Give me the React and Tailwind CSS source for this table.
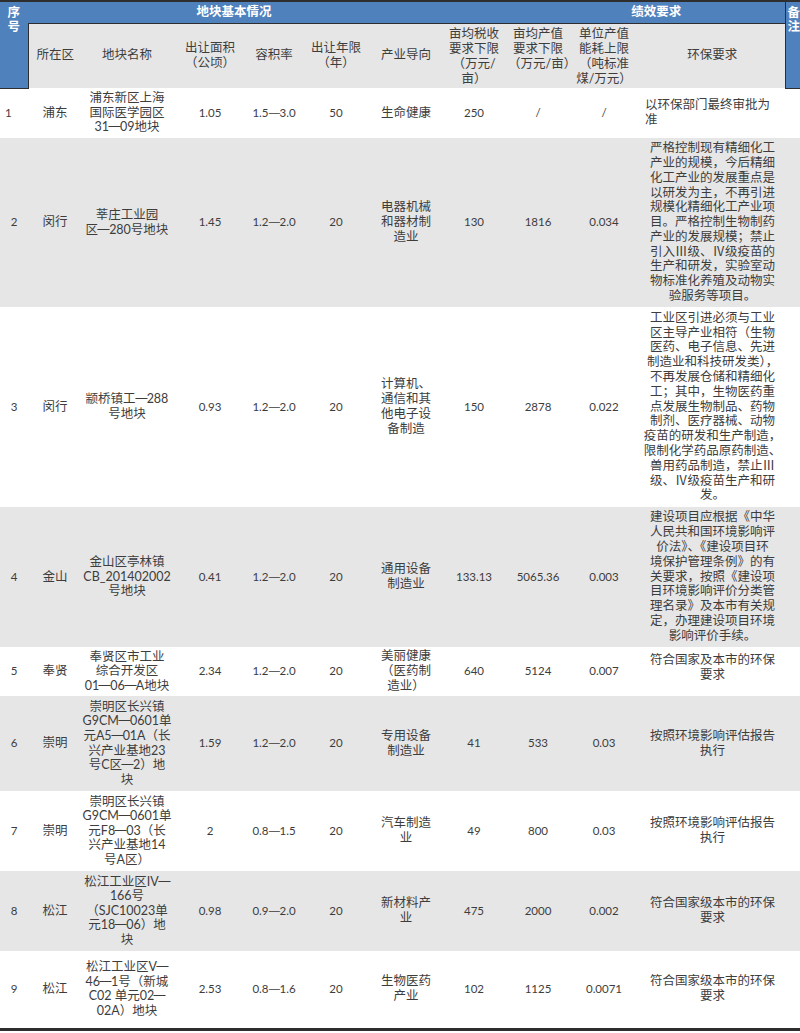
import React from "react";

const GREY = "bg-[#e6e6e6]";

const rows = [
  {
    n: "1", nLeft: true, area: "浦东", name: ["浦东新区上海", "国际医学园区", "31—09地块"], size: "1.05", far: "1.5—3.0", yrs: "50",
    ind: ["生命健康"], tax: "250", out: "/", energy: "/", env: ["以环保部门最终审批为", "准"], envLeft: true, h: "h-[50px]", grey: false,
  },
  {
    n: "2", area: "闵行", name: ["莘庄工业园", "区—280号地块"], size: "1.45", far: "1.2—2.0", yrs: "20",
    ind: ["电器机械", "和器材制", "造业"], tax: "130", out: "1816", energy: "0.034",
    env: ["严格控制现有精细化工", "产业的规模，今后精细", "化工产业的发展重点是", "以研发为主，不再引进", "规模化精细化工产业项", "目。严格控制生物制药", "产业的发展规模；禁止", "引入Ⅲ级、Ⅳ级疫苗的", "生产和研发，实验室动", "物标准化养殖及动物实", "验服务等项目。"],
    h: "h-[169px]", grey: true,
  },
  {
    n: "3", area: "闵行", name: ["颛桥镇工—288", "号地块"], size: "0.93", far: "1.2—2.0", yrs: "20",
    ind: ["计算机、", "通信和其", "他电子设", "备制造"], tax: "150", out: "2878", energy: "0.022",
    env: ["工业区引进必须与工业", "区主导产业相符（生物", "医药、电子信息、先进", "制造业和科技研发类），", "不再发展仓储和精细化", "工；其中，生物医药重", "点发展生物制品、药物", "制剂、医疗器械、动物", "疫苗的研发和生产制造，", "限制化学药品原药制造、", "兽用药品制造，禁止Ⅲ", "级、Ⅳ级疫苗生产和研", "发。"],
    h: "h-[200px]", grey: false,
  },
  {
    n: "4", area: "金山", name: ["金山区亭林镇", "CB_201402002", "号地块"], size: "0.41", far: "1.2—2.0", yrs: "20",
    ind: ["通用设备", "制造业"], tax: "133.13", out: "5065.36", energy: "0.003",
    env: ["建设项目应根据《中华", "人民共和国环境影响评", "价法》、《建设项目环", "境保护管理条例》的有", "关要求，按照《建设项", "目环境影响评价分类管", "理名录》及本市有关规", "定，办理建设项目环境", "影响评价手续。"],
    h: "h-[140px]", grey: true,
  },
  {
    n: "5", area: "奉贤", name: ["奉贤区市工业", "综合开发区", "01—06—A地块"], size: "2.34", far: "1.2—2.0", yrs: "20",
    ind: ["美丽健康", "（医药制", "造业）"], tax: "640", out: "5124", energy: "0.007",
    env: ["符合国家及本市的环保", "要求"], envTop: true, h: "h-[49px]", grey: false,
  },
  {
    n: "6", area: "崇明", name: ["崇明区长兴镇", "G9CM—0601单", "元A5—01A（长", "兴产业基地23", "号C区—2）地", "块"], size: "1.59", far: "1.2—2.0", yrs: "20",
    ind: ["专用设备", "制造业"], tax: "41", out: "533", energy: "0.03",
    env: ["按照环境影响评估报告", "执行"], h: "h-[95px]", grey: true,
  },
  {
    n: "7", area: "崇明", name: ["崇明区长兴镇", "G9CM—0601单", "元F8—03（长", "兴产业基地14", "号A区）"], size: "2", far: "0.8—1.5", yrs: "20",
    ind: ["汽车制造", "业"], tax: "49", out: "800", energy: "0.03",
    env: ["按照环境影响评估报告", "执行"], h: "h-[80px]", grey: false,
  },
  {
    n: "8", area: "松江", name: ["松江工业区IV—", "166号", "（SJC10023单", "元18—06）地", "块"], size: "0.98", far: "0.9—2.0", yrs: "20",
    ind: ["新材料产", "业"], tax: "475", out: "2000", energy: "0.002",
    env: ["符合国家级本市的环保", "要求"], h: "h-[80px]", grey: true,
  },
  {
    n: "9", area: "松江", name: ["松江工业区V—", "46—1号（新城", "C02 单元02—", "02A）地块"], size: "2.53", far: "0.8—1.6", yrs: "20",
    ind: ["生物医药", "产业"], tax: "102", out: "1125", energy: "0.0071",
    env: ["符合国家级本市的环保", "要求"], h: "h-[78px]", grey: false,
  },
];

function Dashed({ text }) {
  const parts = text.split("—");
  return parts.map((p, i) => (
    <React.Fragment key={i}>
      {p}
      {i < parts.length - 1 && (
        <span className="inline-block w-[11px] text-center scale-x-[1.45]">—</span>
      )}
    </React.Fragment>
  ));
}

function Lines({ lines }) {
  return lines.map((l, i) => (
    <React.Fragment key={i}>
      <Dashed text={l} />
      {i < lines.length - 1 && <br />}
    </React.Fragment>
  ));
}

const td = "p-0 align-middle text-center whitespace-nowrap";
const num = "text-[11.5px]";

export default function App() {
  return (
    <div className="w-[800px] bg-white font-[Lato,'Noto_Sans_CJK_SC',sans-serif] text-[12.5px] leading-[14.8px] text-[#3d3d3d] overflow-hidden">
      <table className="w-[800px] table-fixed border-collapse border-t-2 border-b-[3px] border-[#2e2e2e]">
        <colgroup>
          <col className="w-[28px]" />
          <col className="w-[54px]" />
          <col className="w-[90px]" />
          <col className="w-[76px]" />
          <col className="w-[52px]" />
          <col className="w-[72px]" />
          <col className="w-[68px]" />
          <col className="w-[68px]" />
          <col className="w-[60px]" />
          <col className="w-[72px]" />
          <col className="w-[145px]" />
          <col className="w-[15px]" />
        </colgroup>
        <thead>
          <tr className="h-[22px]">
            <th rowSpan={2} className="p-0 pt-[4px] align-top bg-[#4f81bd] text-white font-bold text-center border-b border-[#2e2e2e] leading-[14px]">
              序<br />号
            </th>
            <th colSpan={6} className="p-0 align-middle bg-[#4f81bd] text-white font-bold text-center border-b border-[#2e2e2e]">
              地块基本情况
            </th>
            <th colSpan={4} className="p-0 align-middle bg-[#4f81bd] text-white font-bold text-center border-b border-[#2e2e2e]">
              <span className="pl-[88px]">绩效要求</span>
            </th>
            <th rowSpan={2} className="p-0 pt-[4px] pl-[2px] align-top bg-[#4f81bd] text-white font-bold text-left border-b border-l border-[#2e2e2e] leading-[14px] whitespace-nowrap">
              备<br />注
            </th>
          </tr>
          <tr className={`h-[65px] ${GREY} font-normal`}>
            <th className={`${td} font-normal border-l border-[#2e2e2e]`}>所在区</th>
            <th className={`${td} font-normal`}>地块名称</th>
            <th className={`${td} font-normal`}><Lines lines={["出让面积", "（公顷）"]} /></th>
            <th className={`${td} font-normal`}>容积率</th>
            <th className={`${td} font-normal`}><Lines lines={["出让年限", "（年）"]} /></th>
            <th className={`${td} font-normal`}>产业导向</th>
            <th className={`${td} font-normal leading-[15px]`}><Lines lines={["亩均税收", "要求下限", "（万元/", "亩）"]} /></th>
            <th className={`${td} font-normal leading-[15px]`}><div className="-mt-[14px]"><Lines lines={["亩均产值", "要求下限", "（万元/亩）"]} /></div></th>
            <th className={`${td} font-normal leading-[15px]`}><Lines lines={["单位产值", "能耗上限", "（吨标准", "煤/万元）"]} /></th>
            <th className={`${td} font-normal`}>环保要求</th>
          </tr>
        </thead>
        <tbody>
          {rows.map((r) => (
            <tr key={r.n} className={`${r.h} ${r.grey ? GREY : "bg-white"}`}>
              <td className={`${td} ${num} ${r.nLeft ? "text-left pl-[5px]" : ""}`}>{r.n}</td>
              <td className={td}>{r.area}</td>
              <td className={`${td} leading-[14.6px]`}><Lines lines={r.name} /></td>
              <td className={`${td} ${num}`}>{r.size}</td>
              <td className={`${td} ${num}`}><Dashed text={r.far} /></td>
              <td className={`${td} ${num}`}>{r.yrs}</td>
              <td className={td}><Lines lines={r.ind} /></td>
              <td className={`${td} ${num}`}>{r.tax}</td>
              <td className={`${td} ${num}`}>{r.out}</td>
              <td className={`${td} ${num}`}>{r.energy}</td>
              <td className={`${td} ${r.envLeft ? "text-left pl-[5px]" : ""} ${r.envTop ? "pb-[8px]" : ""}`}>
                <Lines lines={r.env} />
              </td>
              <td className={td}></td>
            </tr>
          ))}
        </tbody>
      </table>
    </div>
  );
}
